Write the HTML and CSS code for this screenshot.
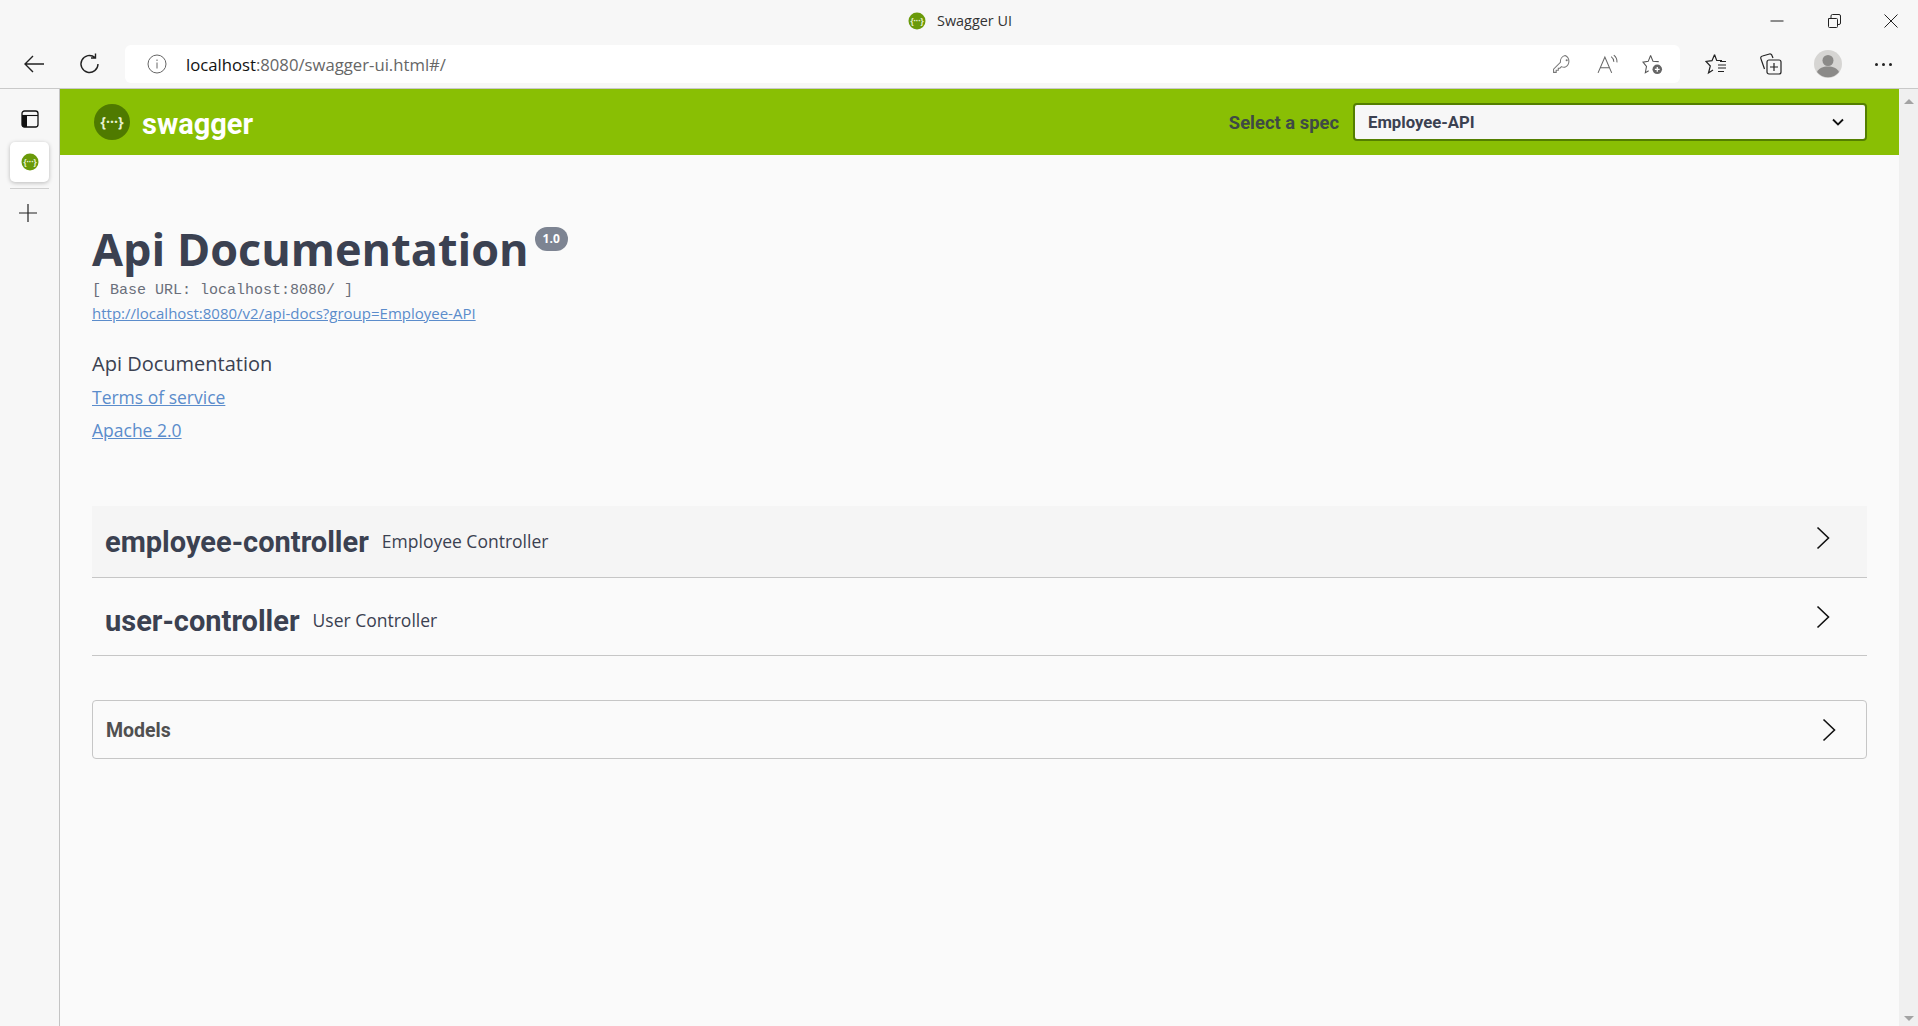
FILE: index.html

```html
<!DOCTYPE html>
<html lang="en">
<head>
    <meta charset="UTF-8">
    <title>Swagger UI</title>
    <link rel="stylesheet" href="styles.css">
</head>
<body>
    <div class="titlebar">
        <div class="window-title">
            <svg class="favicon" viewBox="0 0 18 18"><circle cx="9" cy="9" r="8.500" fill="#6a9a0a"/><text x="9" y="12" text-anchor="middle" class="favicon-text">{···}</text></svg>
            <span>Swagger UI</span>
        </div>
        <div class="window-controls">
            <svg viewBox="0 0 16 16"><path d="M1.500 8h13" stroke="#222" fill="none"/></svg>
            <svg viewBox="0 0 16 16"><path d="M2.500 5.500h8a1 1 0 0 1 1 1v7a1 1 0 0 1-1 1h-7a1 1 0 0 1-1-1zM5 5V3a1.500 1.500 0 0 1 1.500-1.500h6.500a1.500 1.500 0 0 1 1.500 1.500v7a1.500 1.500 0 0 1-1.500 1.500h-1.500" stroke="#222" fill="none"/></svg>
            <svg viewBox="0 0 16 16"><path d="M1.500 1.500l13 13M14.500 1.500l-13 13" stroke="#222" fill="none"/></svg>
        </div>
    </div>

    <div class="toolbar">
        <svg class="tool back" viewBox="0 0 24 24"><path d="M22 12H3M11 4l-8 8 8 8" stroke="#222" stroke-width="1.400" fill="none"/></svg>
        <svg class="tool reload" viewBox="0 0 24 24"><path d="M20 12a8.500 8.500 0 1 1-3-6.500M17.500 1.500v4.500H13" stroke="#222" stroke-width="1.400" fill="none"/></svg>
        <div class="address">
            <svg class="info" viewBox="0 0 20 20"><circle cx="10" cy="10" r="9" stroke="#666" fill="none"/><path d="M10 8.500v6M10 5.500v1.500" stroke="#666" fill="none"/></svg>
            <span class="url">localhost<span class="url-rest">:8080/swagger-ui.html#/</span></span>
            <div class="address-icons">
                <svg viewBox="0 0 20 20"><path d="M12.500 1.500a6 6 0 0 1 0 11 6 6 0 0 1-3.500-.5l-1.500 1.500H6v2H4v2H1.500v-3l6.500-6.500a6 6 0 0 1 4.500-6.500z" stroke="#777" fill="none"/><circle cx="14" cy="6" r="1" fill="#777"/></svg>
                <svg viewBox="0 0 20 20"><path d="M1 18L7.500 3 14 18M3.500 13h8M13.500 2.500a6 6 0 0 1 2.500 5M16 1a8 8 0 0 1 3 7" stroke="#666" fill="none"/></svg>
                <svg viewBox="0 0 22 22"><path d="M9 1.500l2.500 6 6 .5M7 17.500l-3.500 2 1.200-6.500L1 8.500l5.500-.8L9 1.500" stroke="#555" stroke-width="1.100" fill="none"/><circle cx="16" cy="16" r="5" fill="#666"/><path d="M16 13.500v5M13.500 16h5" stroke="#fff" stroke-width="1.300"/></svg>
            </div>
        </div>
        <div class="toolbar-icons">
            <svg viewBox="0 0 24 24"><path d="M9.500 2.500l2.200 6h5.300M8 18l-4.500 3 1.800-7L1 9.500l6-.8 2.500-6M13 13h8M13 16h8M13 19.500h6M15 9.500h6" stroke="#222" stroke-width="1.200" fill="none"/></svg>
            <svg viewBox="0 0 24 24"><rect x="8" y="8" width="14" height="14" rx="2" stroke="#222" stroke-width="1.200" fill="none"/><path d="M15 11v8M11 15h8" stroke="#222" stroke-width="1.200"/><path d="M5.500 17L2 7a2 2 0 0 1 1.500-3l7-2a2 2 0 0 1 2.500 1.500L14 6" stroke="#222" stroke-width="1.200" fill="none"/></svg>
            <div class="avatar"><svg viewBox="0 0 28 28"><circle cx="14" cy="14" r="14" fill="#d6d5d3"/><circle cx="14" cy="10.500" r="5.500" fill="#8b8a88"/><path d="M3 22c2-4 6-5.500 11-5.500S23 18 25 22a14 14 0 0 1-22 0z" fill="#8b8a88"/></svg></div>
            <div class="dots"><i></i><i></i><i></i></div>
        </div>
    </div>

    <div class="browser-body">
        <aside class="sidebar">
            <svg class="side-tabs" viewBox="0 0 18 18"><rect x="1" y="1" width="16" height="16" rx="2.500" stroke="#111" stroke-width="1.300" fill="none"/><path d="M1 5.500h16" stroke="#111" stroke-width="1.100"/><path d="M1 5.500h5V17H3a2 2 0 0 1-2-2z" fill="#111"/></svg>
            <div class="side-tab">
                <svg class="favicon" viewBox="0 0 18 18"><circle cx="9" cy="9" r="8.500" fill="#6a9a0a"/><text x="9" y="12" text-anchor="middle" class="favicon-text">{···}</text></svg>
            </div>
            <div class="side-line"></div>
            <svg class="side-plus" viewBox="0 0 18 18"><path d="M9 0v18M0 9h18" stroke="#222" stroke-width="1.200"/></svg>
        </aside>

        <main class="page">
            <header class="topbar">
                <a class="brand">
                    <svg class="logo" viewBox="0 0 36 36"><circle cx="18" cy="18" r="18" fill="#4f7a00"/><text x="18" y="23" text-anchor="middle" class="logo-text">{···}</text></svg>
                    <span class="brand-name">swagger</span>
                </a>
                <div class="spec-picker">
                    <label>Select a spec</label>
                    <div class="select">
                        <span>Employee-API</span>
                        <svg viewBox="0 0 12 8"><path d="M1 1.500l5 5 5-5" stroke="#111" stroke-width="1.800" fill="none"/></svg>
                    </div>
                </div>
            </header>

            <section class="info-block">
                <h1>Api Documentation <span class="version">1.0</span></h1>
                <div class="base-url">[ Base URL: localhost:8080/ ]</div>
                <a class="spec-link" href="#">http://localhost:8080/v2/api-docs?group=Employee-API</a>
                <p class="description">Api Documentation</p>
                <p class="info-link first"><a href="#">Terms of service</a></p>
                <p class="info-link"><a href="#">Apache 2.0</a></p>
            </section>

            <section class="tags">
                <div class="tag tag-hover">
                    <span class="tag-name">employee-controller</span>
                    <span class="tag-desc">Employee Controller</span>
                    <svg class="chevron" viewBox="0 0 14 24"><path d="M1.500 1.500L12.500 12 1.500 22.500" stroke="#111" stroke-width="1.600" fill="none"/></svg>
                </div>
                <div class="tag">
                    <span class="tag-name">user-controller</span>
                    <span class="tag-desc">User Controller</span>
                    <svg class="chevron" viewBox="0 0 14 24"><path d="M1.500 1.500L12.500 12 1.500 22.500" stroke="#111" stroke-width="1.600" fill="none"/></svg>
                </div>
            </section>

            <section class="models">
                <span class="models-title">Models</span>
                <svg class="chevron" viewBox="0 0 14 24"><path d="M1.500 1.500L12.500 12 1.500 22.500" stroke="#111" stroke-width="1.600" fill="none"/></svg>
            </section>
        </main>

        <div class="scrollbar">
            <i class="arrow-up"></i>
            <i class="arrow-down"></i>
        </div>
    </div>
</body>
</html>
```

FILE: styles.css

```css
* {
    box-sizing: border-box;
}
html, body {
    height: 100%;
}
body {
    margin: 0;
    overflow: hidden;
    display: flex;
    flex-direction: column;
    background: #f7f7f7;
    font-family: "Open Sans", sans-serif;
    color: #3b4151;
}

/* browser chrome */
.titlebar {
    height: 41px;
    display: grid;
    grid-template-columns: 1fr auto 1fr;
    align-items: center;
    padding: 0 19px 0 21px;
}
.window-title {
    grid-column: 2;
    display: flex;
    align-items: center;
    gap: 11px;
    font-size: 14.400px;
    color: #333;
}
.favicon {
    width: 18px;
    height: 18px;
}
.favicon-text {
    font: 700 8px "Open Sans", sans-serif;
    fill: #eef5dc;
}
.window-controls {
    justify-self: end;
    display: flex;
    gap: 41px;
}
.window-controls svg {
    width: 16px;
    height: 16px;
}
.toolbar {
    height: 48px;
    display: flex;
    align-items: flex-start;
    padding: 4px 0 0 22px;
    border-bottom: 1px solid #c9c9c9;
}
.tool {
    width: 24px;
    height: 24px;
    margin-top: 7px;
}
.reload {
    margin-left: 32px;
}
.address {
    width: 1555px;
    height: 38px;
    margin-left: 23px;
    background: #fff;
    border-radius: 6px;
    display: flex;
    align-items: center;
    padding: 0 17px 0 22px;
}
.info {
    width: 20px;
    height: 20px;
}
.url {
    margin-left: 19px;
    font-size: 16.700px;
    color: #111;
}
.url-rest {
    color: #666;
}
.address-icons {
    margin-left: auto;
    display: flex;
    align-items: center;
    gap: 24px;
}
.address-icons svg {
    width: 21px;
    height: 21px;
}
.toolbar-icons {
    display: flex;
    align-items: center;
    height: 38px;
    margin-left: 25px;
}
.toolbar-icons > svg {
    width: 24px;
    height: 24px;
    margin-right: 30px;
}
.avatar {
    width: 28px;
    height: 28px;
    margin-left: 1px;
}
.dots {
    display: flex;
    gap: 4px;
    margin-left: 33px;
}
.dots i {
    width: 3px;
    height: 3px;
    border-radius: 50%;
    background: #222;
}

.browser-body {
    flex: 1;
    display: flex;
    min-height: 0;
}
.sidebar {
    width: 60px;
    border-right: 1px solid #c4c4c4;
    padding: 0 10px;
    display: flex;
    flex-direction: column;
    align-items: center;
}
.side-line {
    width: 39px;
    height: 1px;
    background: #cfcfcf;
    flex: none;
}
.side-tabs {
    width: 18px;
    height: 18px;
    margin: 21px 0 14px;
}
.side-tab {
    width: 39px;
    height: 40px;
    margin-bottom: 6px;
    background: #fff;
    border-radius: 5px;
    box-shadow: 0 1px 4px rgba(0,0,0,0.25);
    display: flex;
    align-items: center;
    justify-content: center;
}
.side-plus {
    width: 18px;
    height: 18px;
    margin: 15px 3px 0 0;
}

/* swagger page */
.page {
    flex: 1;
    background: #fafafa;
}
.topbar {
    height: 66px;
    background: #89bf04;
    display: flex;
    align-items: center;
    justify-content: space-between;
    padding: 0 32px 0 34px;
}
.brand {
    display: flex;
    align-items: center;
    gap: 12px;
    color: #fff;
    font: 700 29px Roboto, sans-serif;
}
.brand-name {
    padding-top: 3px;
}
.logo {
    width: 36px;
    height: 36px;
}
.logo-text {
    font: 700 14px "Open Sans", sans-serif;
    fill: #e8f2d0;
}
.spec-picker {
    display: flex;
    align-items: center;
    gap: 14px;
}
.spec-picker label {
    font: 700 18.400px Roboto, sans-serif;
    color: #3e4a45;
}
.select {
    width: 514px;
    height: 38px;
    border: 2px solid #547f00;
    border-radius: 4px;
    background: #f7f7f7;
    display: flex;
    align-items: center;
    justify-content: space-between;
    padding: 0 21px 0 13px;
    font: 700 16.700px Roboto, sans-serif;
}
.select svg {
    width: 12px;
    height: 8px;
}

.info-block {
    padding: 66px 32px 0;
}
h1 {
    margin: 0;
    font-size: 45px;
    line-height: 56px;
    font-weight: 700;
    color: #3b4151;
    display: flex;
    align-items: flex-start;
    gap: 6px;
}
.version {
    margin-top: 6px;
    height: 24px;
    padding: 0 8px;
    border-radius: 12px;
    background: #7d8492;
    color: #fff;
    font-size: 12px;
    line-height: 24px;
}
.base-url {
    margin-top: 4px;
    font: 15px/20px "Liberation Mono", monospace;
    color: #6a6f7a;
}
.spec-link {
    display: block;
    margin-top: 2px;
    font-size: 15px;
    line-height: 20px;
}
a {
    color: #5b8ccb;
}
.description {
    margin: 27px 0 0;
    font-size: 20px;
    line-height: 27px;
}
.info-link {
    margin: 6px 0 0;
    font-size: 17.500px;
    line-height: 27px;
}
.info-link.first {
    margin-top: 7px;
}

.tags {
    margin: 62px 32px 0;
}
.tag {
    height: 78px;
    display: flex;
    align-items: center;
    gap: 13px;
    padding: 9px 37px 0 13px;
    border-bottom: 1px solid #c6c6c6;
}
.tag-hover {
    height: 72px;
    padding-top: 0;
    background: #f5f5f5;
}
.tag-name {
    font: 700 29px Roboto, sans-serif;
}
.tag-desc {
    margin-bottom: 2px;
    font-size: 17.500px;
}
.tag .chevron {
    margin: -9px 0 0 auto;
}
.tag-hover .chevron {
    margin-top: -7px;
}
.chevron {
    width: 14px;
    height: 24px;
}
.models {
    height: 59px;
    margin: 44px 32px 0;
    border: 1px solid #c6c6c6;
    border-radius: 4px;
    display: flex;
    align-items: center;
    justify-content: space-between;
    padding: 0 30px 0 13px;
    font: 700 19.500px Roboto, sans-serif;
    color: #505050;
}
.models-title {
    padding-top: 2px;
}

.scrollbar {
    width: 19px;
    background: #f0f0f0;
    display: flex;
    flex-direction: column;
    justify-content: space-between;
    align-items: center;
    padding: 10px 0 5px;
}
.arrow-up {
    border: 5px solid transparent;
    border-top: 0;
    border-bottom: 5px solid #a3a3a3;
}
.arrow-down {
    border: 5px solid transparent;
    border-bottom: 0;
    border-top: 5px solid #a3a3a3;
}
```
